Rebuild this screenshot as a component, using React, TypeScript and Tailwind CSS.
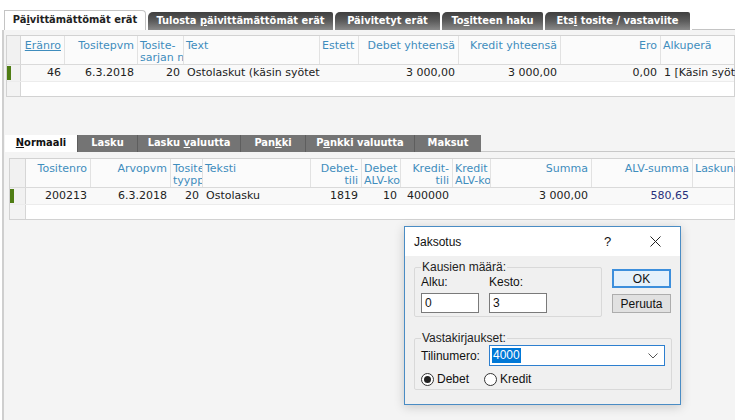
import React from 'react';

type Col = {
  w: number;
  head: string[];
  align: 'l' | 'r';
  dataAlign?: 'l' | 'r';
  link?: boolean;
  value?: string;
  valueClass?: string;
};

const topCols: Col[] = [
  { w: 44, head: ['Eränro'], align: 'r', link: true, value: '46' },
  { w: 73, head: ['Tositepvm'], align: 'r', value: '6.3.2018' },
  { w: 46, head: ['Tosite-', 'sarjan nro'], align: 'l', dataAlign: 'r', value: '20' },
  { w: 136, head: ['Text'], align: 'l', value: 'Ostolaskut (käsin syötetyt)' },
  { w: 39, head: ['Estett'], align: 'l', value: '' },
  { w: 100, head: ['Debet yhteensä'], align: 'r', value: '3 000,00' },
  { w: 102, head: ['Kredit yhteensä'], align: 'r', value: '3 000,00' },
  { w: 100, head: ['Ero'], align: 'r', value: '0,00' },
  { w: 120, head: ['Alkuperä'], align: 'l', value: '1 [Käsin syötetty]' },
];

const bottomCols: Col[] = [
  { w: 65, head: ['Tositenro'], align: 'r', value: '200213' },
  { w: 80, head: ['Arvopvm'], align: 'r', value: '6.3.2018' },
  { w: 32, head: ['Tosite', 'tyyppi'], align: 'l', dataAlign: 'r', value: '20' },
  { w: 108, head: ['Teksti'], align: 'l', value: 'Ostolasku' },
  { w: 51, head: ['Debet-', 'tili'], align: 'r', value: '1819' },
  { w: 39, head: ['Debet', 'ALV-koodi'], align: 'l', dataAlign: 'r', value: '10' },
  { w: 52, head: ['Kredit-', 'tili'], align: 'r', value: '400000' },
  { w: 38, head: ['Kredit', 'ALV-koodi'], align: 'l', value: '' },
  { w: 101, head: ['Summa'], align: 'r', value: '3 000,00' },
  { w: 101, head: ['ALV-summa'], align: 'r', value: '580,65', valueClass: 'text-[#28307c]' },
  { w: 90, head: ['Laskunro'], align: 'l', value: '' },
];

function Grid({ cols, indW, headH }: { cols: Col[]; indW: number; headH: number }) {
  return (
    <div className="border border-[#d2d2d2] bg-white">
      {/* header */}
      <div className="flex border-b border-[#dadada] bg-[#fbfbfb]" style={{ height: headH }}>
        <div className="shrink-0 border-r border-[#d6d6d6] bg-[#f1f1f1]" style={{ width: indW }} />
        {cols.map((c, i) => (
          <div
            key={i}
            className={`shrink-0 overflow-hidden whitespace-nowrap border-r border-[#e2e2e2] pt-[4px] text-[11px] leading-[12px] text-[#3f8dbd] ${c.align === 'r' ? 'pr-[3px] text-right' : 'pl-[2px] text-left'}`}
            style={{ width: c.w }}
          >
            {c.head.map((h, j) => (
              <div key={j} className={c.link ? 'underline' : ''}>
                {h}
              </div>
            ))}
          </div>
        ))}
      </div>
      {/* data row */}
      <div className="flex h-[16px] bg-[#f9f9f9]">
        <div className="flex shrink-0 items-stretch border-r border-[#d6d6d6] bg-[#f1f1f1] py-[1px]" style={{ width: indW }}>
          <div className="w-[4px] bg-[#4f7d14]" />
        </div>
        {cols.map((c, i) => {
          const a = c.dataAlign ?? c.align;
          return (
            <div
              key={i}
              className={`shrink-0 overflow-hidden whitespace-nowrap text-[11px] leading-[16px] text-[#222] ${a === 'r' ? 'pr-[4px] text-right' : 'pl-[3px] text-left'} ${c.valueClass ?? ''}`}
              style={{ width: c.w }}
            >
              {c.value}
            </div>
          );
        })}
      </div>
      {/* empty row */}
      <div className="flex h-[15px] border-t border-[#ececec]">
        <div className="shrink-0 border-r border-[#d6d6d6] bg-[#f3f3f3]" style={{ width: indW }} />
      </div>
    </div>
  );
}

function U({ children }: { children: React.ReactNode }) {
  return <span className="underline">{children}</span>;
}

function TopTab({ children, w, active }: { children: React.ReactNode; w: number; active?: boolean }) {
  if (active) {
    return (
      <div
        className="flex h-[20px] shrink-0 items-center justify-center rounded-tr-[4px] border border-b-0 border-[#c4c4c4] bg-white text-[#222]"
        style={{ width: w }}
      >
        <span className="whitespace-pre">{children}</span>
      </div>
    );
  }
  return (
    <div
      className="mt-[2px] flex h-[18px] shrink-0 items-center justify-center rounded-tl-[5px] rounded-tr-[2px] bg-gradient-to-b from-[#3f3f3f] via-[#5c5c5c] to-[#8a8a8a] text-white"
      style={{ width: w }}
    >
      <span className="whitespace-pre">{children}</span>
    </div>
  );
}

function BottomTab({ children, w, active }: { children: React.ReactNode; w: number; active?: boolean }) {
  return (
    <div
      className={`flex h-[17px] shrink-0 items-center justify-center ${active ? 'bg-white text-[#111]' : 'border-l border-[#5e5e5e] bg-[#747474] text-white'}`}
      style={{ width: w }}
    >
      <span className="whitespace-pre">{children}</span>
    </div>
  );
}

function Radio({ checked, label }: { checked?: boolean; label: string }) {
  return (
    <div className="flex items-center gap-[3px]">
      <div className="flex h-[13px] w-[13px] items-center justify-center rounded-full border border-[#333] bg-white">
        {checked && <div className="h-[7px] w-[7px] rounded-full bg-[#222]" />}
      </div>
      <span>{label}</span>
    </div>
  );
}

function Dialog() {
  return (
    <div className="absolute left-[404px] top-[226px] flex h-[179px] w-[277px] flex-col border border-[#4a8cc4] bg-[#f0f0f0] font-['Liberation_Sans',Arial,sans-serif] text-[12px] text-[#111] shadow-[0_2px_10px_rgba(0,0,0,0.18)]">
      <div className="flex h-[29px] shrink-0 items-center bg-white pl-[9px]">
        <span className="flex-1">Jaksotus</span>
        <span className="w-[16px] text-[13px]">?</span>
        <div className="ml-[29px] mr-[19px] flex h-[12px] w-[12px] items-center justify-center">
          <svg width="11" height="11" viewBox="0 0 11 11">
            <path d="M0.5 0.5 L10.5 10.5 M10.5 0.5 L0.5 10.5" stroke="#222" strokeWidth="1" />
          </svg>
        </div>
      </div>
      <div className="flex flex-col px-[9px] pt-[5px]">
        <div className="flex">
          <fieldset className="h-[56px] w-[189px] rounded-[2px] border border-[#d9d9d9] px-[6px]">
            <legend className="px-[1px] leading-[13px] text-[#222]">Kausien määrä:</legend>
            <div className="flex gap-[10px]">
              <div className="flex flex-col">
                <span className="leading-[16px]">Alku:</span>
                <div className="mt-[3px] flex h-[20px] w-[58px] items-center border border-[#7a7a7a] bg-white pl-[3px]">0</div>
              </div>
              <div className="flex flex-col">
                <span className="leading-[16px]">Kesto:</span>
                <div className="mt-[3px] flex h-[20px] w-[58px] items-center border border-[#7a7a7a] bg-white pl-[3px]">3</div>
              </div>
            </div>
          </fieldset>
          <div className="ml-[10px] mt-[8px] flex flex-col gap-[6px]">
            <div className="flex h-[19px] w-[59px] items-center justify-center border-2 border-[#3d8fdc] bg-[#e5f1fb]">OK</div>
            <div className="flex h-[19px] w-[59px] items-center justify-center border border-[#adadad] bg-[#e1e1e1]">Peruuta</div>
          </div>
        </div>
        <fieldset className="mt-[15px] h-[58px] w-[258px] rounded-[2px] border border-[#d9d9d9] px-[6px]">
          <legend className="px-[1px] leading-[13px] text-[#222]">Vastakirjaukset:</legend>
          <div className="flex items-center">
            <span className="w-[68px]">Tilinumero:</span>
            <div className="flex h-[21px] w-[176px] items-center border border-[#2d7fcf] bg-white pl-[2px] pr-[6px]">
              <span className="bg-[#0078d7] px-[1px] leading-[15px] text-white">4000</span>
              <span className="flex-1" />
              <svg width="10" height="6" viewBox="0 0 10 6">
                <path d="M0.5 0.5 L5 5 L9.5 0.5" fill="none" stroke="#555" strokeWidth="1" />
              </svg>
            </div>
          </div>
          <div className="mt-[4px] flex gap-[15px]">
            <Radio checked label="Debet" />
            <Radio label="Kredit" />
          </div>
        </fieldset>
      </div>
    </div>
  );
}

export default function App() {
  return (
    <div className="relative h-[420px] w-[735px] overflow-hidden bg-white font-['DejaVu_Sans',Verdana,sans-serif] text-[11px]">
      {/* top tabs */}
      <div className="flex items-start gap-[2px] pl-[4px] pt-[10px] font-['DejaVu_Sans_Condensed','DejaVu_Sans',sans-serif] text-[11px] font-bold">
        <TopTab w={142} active>
          Pä<U>i</U>vittämättömät erät
        </TopTab>
        <TopTab w={185}>
          Tulosta <U>p</U>äivittämättömät erät
        </TopTab>
        <TopTab w={105}>Päivitetyt erät</TopTab>
        <TopTab w={101}>
          To<U>s</U>itteen haku
        </TopTab>
        <TopTab w={145}>
          Ets<U>i</U> tosite / vastaviite
        </TopTab>
        <div className="h-[20px] flex-1 border-b border-[#c4c4c4]" />
      </div>

      {/* content panel */}
      <div className="ml-[2px] h-[390px] border-l-2 border-[#cfcfcf] bg-[#f4f4f4] pt-[5px]">
        <div className="ml-[2px]">
          <Grid cols={topCols} indW={14} headH={29} />
        </div>

        {/* lower tabs */}
        <div className="ml-[1px] mt-[38px] flex font-['DejaVu_Sans_Condensed','DejaVu_Sans',sans-serif] text-[11px] font-bold">
          <BottomTab w={72} active>
            <U>N</U>ormaali
          </BottomTab>
          <BottomTab w={60}>Lasku</BottomTab>
          <BottomTab w={103}>
            Lasku <U>v</U>aluutta
          </BottomTab>
          <BottomTab w={65}>
            Pan<U>k</U>ki
          </BottomTab>
          <BottomTab w={109}>
            P<U>a</U>nkki valuutta
          </BottomTab>
          <BottomTab w={67}>Maksut</BottomTab>
          <div className="h-[17px] flex-1 border-b border-[#c8c8c8]" />
        </div>

        <div className="ml-[5px] mt-[6px]">
          <Grid cols={bottomCols} indW={16} headH={29} />
        </div>
      </div>

      <Dialog />
    </div>
  );
}
